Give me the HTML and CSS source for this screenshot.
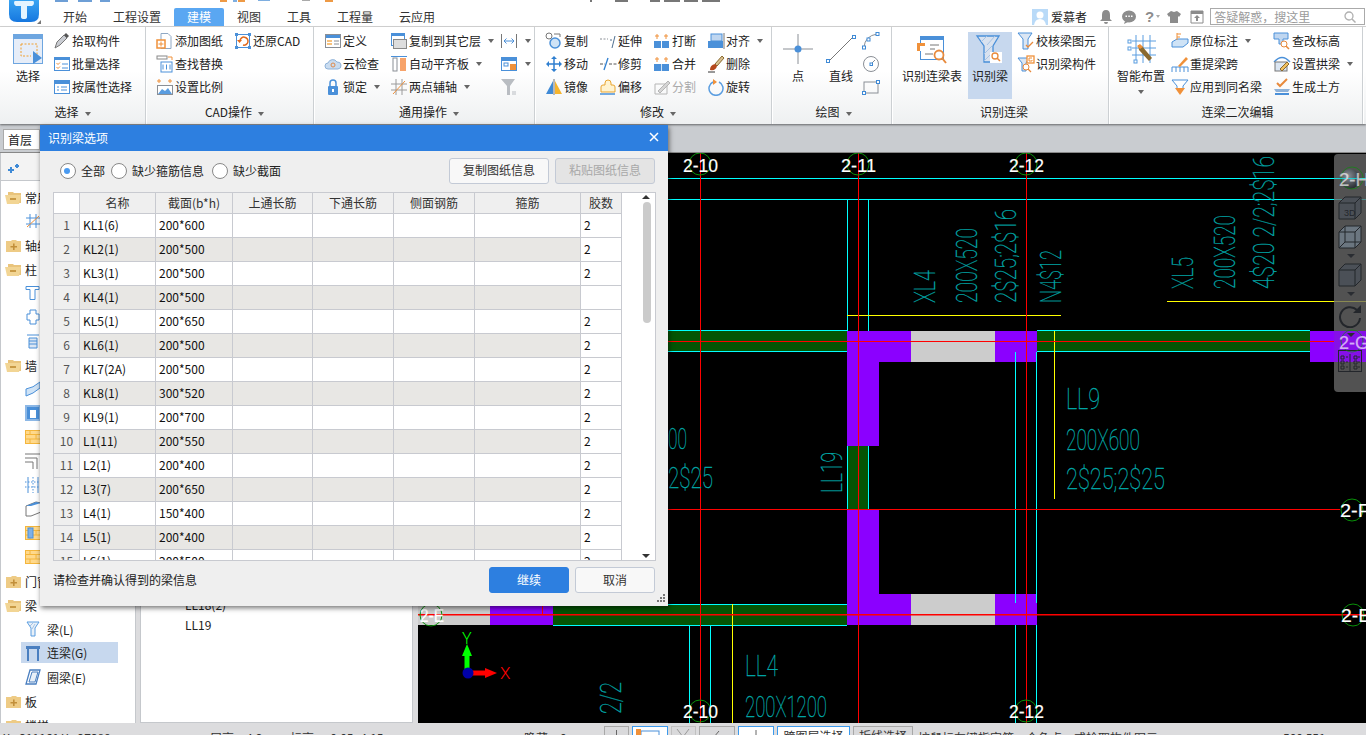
FILE: index.html
```html
<!DOCTYPE html>
<html lang="zh-CN">
<head>
    <meta charset="UTF-8">
    <title>识别梁选项</title>
    <link rel="stylesheet" href="styles.css">
</head>
<body>

    <!-- Shared icons -->
    <svg class="sprite" xmlns="http://www.w3.org/2000/svg">
        <symbol id="folder-open" viewBox="0 0 17 13">
            <path d="M3 1h5l1 1h7v10H3z" fill="#e9c47c"/>
            <path d="M0 4h14l2 0-2 9H2z" fill="#f2d594"/>
            <rect x="5" y="7" width="6" height="2" fill="#c99a45"/>
        </symbol>
        <symbol id="folder-closed" viewBox="0 0 17 13">
            <path d="M1 2h5l1-1h4l1 1h4v11H1z" fill="#eecb85"/>
            <path d="M8 4.5h1.6v2.4H12v1.6H9.600v2.400H8V8.500H5.500V6.900H8z" fill="#c28f3a"/>
        </symbol>
        <symbol id="brick" viewBox="0 0 16 14">
            <rect x=".5" y=".5" width="15" height="13" fill="#ffd98c" stroke="#f4b63c"/>
            <path d="M0 4.500h16M0 9h16M5 0v4.500M11 4.500V9M5 9v5" stroke="#f4b63c" fill="none"/>
        </symbol>
    </svg>

    <!-- Top bar -->
    <div class="topbar">
        <svg class="quick" width="720" height="3" viewBox="0 0 720 3">
            <path d="M55 0h13v2H55zM78 0h14v2H78zM100 0h10v2h-10z" fill="#6e9fd6"/>
            <path d="M220 0h7v2h-7zM325 0h8v2h-8zM238 0h7v2h-7z" fill="#ee9a45"/>
            <path d="M233 0h4v2h-4zM258 0h12v1h-12z" fill="#7eaee0"/>
            <path d="M302 0h8v1h-8z" fill="#aaa"/>
            <path d="M590 0h2v2h-2zM615 0h13v2h-13zM650 0h10v2h-10zM664 0h16v2h-16zM684 0h14v2h-14zM702 0h18v2h-18z" fill="#777"/>
        </svg>
        <div class="logo">
            <svg width="30" height="22" viewBox="0 0 30 22"><defs><linearGradient id="logo-bg" x1="0" y1="0" x2="0" y2="1"><stop offset="0" stop-color="#39a4f2"/><stop offset="1" stop-color="#1677df"/></linearGradient></defs><path d="M0 0h30v14q0 8-8 8H8q-8 0-8-8z" fill="url(#logo-bg)"/><path d="M6 1h18q1 0 1 2t-2 3h-5v11q0 2-3 2t-3-2V6H7Q5 5 5 3t1-2z" fill="#e4f4ff"/></svg>
            <span class="logo-arrow"></span>
        </div>
        <div class="tabs">
            <span class="tab">开始</span>
            <span class="tab">工程设置</span>
            <span class="tab active">建模</span>
            <span class="tab">视图</span>
            <span class="tab">工具</span>
            <span class="tab">工程量</span>
            <span class="tab">云应用</span>
        </div>
        <div class="user-area">
            <svg class="avatar" width="16" height="16" viewBox="0 0 16 16"><rect width="16" height="16" fill="#b9daf8"/><circle cx="8" cy="6" r="3.500" fill="#fff"/><path d="M2 16q1-6 6-6t6 6z" fill="#fff"/></svg>
            <span class="user-name">爱慕者</span>
            <svg class="top-ic" width="14" height="14" viewBox="0 0 14 14"><path d="M7 0q4 0 4 5v4l2 2H1l2-2V5q0-5 4-5zM5 12h4q0 2-2 2t-2-2z" fill="#8c8c8c"/></svg>
            <svg class="top-ic" width="14" height="14" viewBox="0 0 14 14"><ellipse cx="7" cy="6.500" rx="7" ry="6" fill="#8c8c8c"/><path d="M3 11l-1 3 4-2z" fill="#8c8c8c"/><path d="M3.500 5.500h1.500v1.500H3.500zM6.300 5.500h1.500v1.500H6.300zM9 5.500h1.500v1.500H9z" fill="#fff"/></svg>
            <span class="help">?</span><span class="caret small"></span>
            <svg class="top-ic" width="14" height="14" viewBox="0 0 14 14"><path d="M4 1l3 1 3-1 4 3-2 3-1-1v7H3V6L2 7 0 4z" fill="#8c8c8c"/></svg>
            <svg class="top-ic" width="14" height="14" viewBox="0 0 14 14"><path d="M1 1h12v12H1z" fill="none" stroke="#8c8c8c"/><path d="M1 1h12v3H1zM7 5l3 3H8v3H6V8H4z" fill="#8c8c8c"/></svg>
            <div class="search-box">
                <span>答疑解惑，搜这里</span>
                <svg width="12" height="12" viewBox="0 0 12 12"><circle cx="5" cy="5" r="4" fill="none" stroke="#b0b0b0" stroke-width="1.300"/><path d="M8 8l3.500 3.500" stroke="#b0b0b0" stroke-width="1.500"/></svg>
            </div>
        </div>
    </div>

    <!-- Ribbon -->
    <div class="ribbon">
        <div class="group g-select">
            <div class="group-body">
                <div class="big w-50">
                    <svg width="30" height="30" viewBox="0 0 30 30"><rect x=".5" y=".5" width="29" height="29" fill="#e6edf8" stroke="#6ea6e0"/><rect x="1" y="1" width="28" height="4" fill="#6ea6e0"/><path d="M8 10h16v14" fill="none" stroke="#f0a030" stroke-dasharray="2 1.500"/><path d="M8 10v12h10" fill="none" stroke="#f0a030" stroke-dasharray="2 1.500"/><path d="M20 17l9 7-9 6z" fill="#4a90d9"/></svg>
                    <span>选择</span>
                </div>
                <div class="stack">
                    <div class="item"><svg class="ic" viewBox="0 0 18 18"><path d="M2 16l2-6 7-7 3 3-7 7z" fill="#c9ccd2" stroke="#777"/><path d="M11 3l2-2 3 3-2 2z" fill="#555"/></svg>拾取构件</div>
                    <div class="item"><svg class="ic" viewBox="0 0 18 18"><rect x="1.500" y="2.500" width="15" height="13" fill="#fff" stroke="#4a90d9"/><path d="M1 3h16v2H1z" fill="#4a90d9"/><path d="M3.500 8l1.500 1.500 2-2M3.500 12l1.500 1.500 2-2" stroke="#f0913a" fill="none"/><path d="M9 9h6M9 13h6" stroke="#4a90d9"/></svg>批量选择</div>
                    <div class="item"><svg class="ic" viewBox="0 0 18 18"><rect x="1.500" y="2.500" width="15" height="13" fill="#fff" stroke="#4a90d9"/><path d="M1 3h16v3H1z" fill="#4a90d9"/><path d="M4 9h2M8 9h6M4 12h2M8 12h6" stroke="#4a90d9"/></svg>按属性选择</div>
                </div>
            </div>
            <div class="group-label">选择<span class="caret"></span></div>
        </div>

        <div class="group g-cad">
            <div class="group-body">
                <div class="stack w-78">
                    <div class="item"><svg class="ic" viewBox="0 0 18 18"><path d="M5 1.500h7l3 3v12H5z" fill="#fff" stroke="#8fa8c4"/><rect x="1" y="8" width="8" height="8" fill="#fff" stroke="#f0913a" stroke-width="1.500"/><path d="M5 9.500v5M2.500 12h5" stroke="#f0913a"/></svg>添加图纸</div>
                    <div class="item"><svg class="ic" viewBox="0 0 18 18"><rect x="1" y="1" width="10" height="3" fill="none" stroke="#888"/><path d="M12 2h4v3" fill="none" stroke="#f0913a"/><rect x="5" y="7" width="11" height="10" fill="#fff" stroke="#4a90d9"/><path d="M7 9.500v5M10.500 9.500v5M14 9.500v5" stroke="#4a90d9"/></svg>查找替换</div>
                    <div class="item"><svg class="ic" viewBox="0 0 18 18"><path d="M3 1v4M1 3h4M14 1v4M12 3h4" stroke="#f0913a"/><rect x="1.500" y="7.500" width="15" height="9" fill="#fff" stroke="#8a8f96"/><path d="M2 16l4-5 3 2 3-3 4 6z" fill="#5a9de0"/></svg>设置比例</div>
                </div>
                <div class="stack">
                    <div class="item"><svg class="ic" viewBox="0 0 18 18"><rect x="2.500" y="2.500" width="13" height="13" fill="none" stroke="#4a90d9"/><path d="M1 1h3v3H1zM14 1h3v3h-3zM1 14h3v3H1zM14 14h3v3h-3z" fill="#4a90d9"/><path d="M6 9a4 4 0 1 1 3 4" fill="none" stroke="#e0691c" stroke-width="1.500"/><path d="M3 8h5l-2.500 3z" fill="#e0691c"/></svg>还原CAD</div>
                </div>
            </div>
            <div class="group-label">CAD操作<span class="caret"></span></div>
        </div>

        <div class="group g-common">
            <div class="group-body">
                <div class="stack w-66">
                    <div class="item"><svg class="ic" viewBox="0 0 18 18"><rect x="1.500" y="2.500" width="15" height="13" fill="#fff" stroke="#8a8f96"/><path d="M2 3h14v3H2z" fill="#4a90d9"/><path d="M3 8h5v2H3zM3 11h5v2H3z" fill="#f7c27e"/><path d="M10 9h5M10 12h5" stroke="#8a8f96"/></svg>定义</div>
                    <div class="item"><svg class="ic" viewBox="0 0 18 18"><path d="M4 14a3 3 0 0 1 0-6 5 5 0 0 1 9-1 3.500 3.500 0 0 1 1 7z" fill="#c9dcf0" stroke="#8fb2d8"/><circle cx="9" cy="10" r="2" fill="none" stroke="#e08a4a"/></svg>云检查</div>
                    <div class="item"><svg class="ic" viewBox="0 0 18 18"><path d="M6 8V5a3 3 0 0 1 6 0v3" fill="none" stroke="#4a90d9" stroke-width="1.500"/><rect x="4" y="8" width="10" height="9" rx="1" fill="#4a90d9"/><rect x="8" y="11" width="2" height="3" fill="#fff"/></svg>锁定<span class="caret"></span></div>
                </div>
                <div class="stack w-110">
                    <div class="item"><svg class="ic" viewBox="0 0 18 18"><rect x="1.500" y="1.500" width="13" height="12" fill="#fff" stroke="#4a90d9"/><rect x="1" y="1" width="14" height="3" fill="#4a90d9"/><rect x="3.500" y="7.500" width="13" height="9" fill="#ddd" stroke="#888"/></svg>复制到其它层<span class="caret"></span></div>
                    <div class="item"><svg class="ic" viewBox="0 0 18 18"><path d="M1 1.500h16" stroke="#4a90d9"/><rect x="3" y="3" width="4" height="13" fill="#fff" stroke="#8a8f96"/><rect x="10" y="3" width="6" height="13" fill="#f7a36a"/></svg>自动平齐板<span class="caret"></span></div>
                    <div class="item"><svg class="ic" viewBox="0 0 18 18"><path d="M1 12h16M1 6h16M6 1v16M12 1v16" stroke="#9a9a9a"/><path d="M3 16L15 3" stroke="#f0913a"/></svg>两点辅轴<span class="caret"></span></div>
                </div>
                <div class="stack">
                    <div class="item"><svg class="ic" viewBox="0 0 18 18"><path d="M1.500 2v14M16.500 2v14" stroke="#777"/><path d="M4 9h10M4 9l2.500-2.500M4 9l2.500 2.500M14 9l-2.500-2.500M14 9l-2.500 2.500" stroke="#4a90d9" fill="none"/></svg><span class="caret"></span></div>
                    <div class="item"><svg class="ic" viewBox="0 0 18 18"><rect x="1.500" y="2.500" width="15" height="13" fill="#fff" stroke="#4a90d9"/><path d="M2 3h14v3H2z" fill="#4a90d9"/><rect x="4" y="8" width="4" height="3" fill="#fff" stroke="#4a90d9"/><rect x="10" y="9" width="6" height="6" fill="#f0913a"/></svg><span class="caret"></span></div>
                    <div class="item"><svg class="ic" viewBox="0 0 18 18"><path d="M1 1h14l-5 7v9H7V8z" fill="#b9bdc2"/><path d="M12 14h4M12 16h4" stroke="#b9bdc2"/></svg></div>
                </div>
            </div>
            <div class="group-label">通用操作<span class="caret"></span></div>
        </div>

        <div class="group g-edit">
            <div class="group-body">
                <div class="stack w-54">
                    <div class="item"><svg class="ic" viewBox="0 0 18 18"><circle cx="4" cy="4" r="3" fill="#fff" stroke="#777"/><circle cx="10" cy="11" r="5" fill="#cfe3f6" stroke="#4a90d9" stroke-width="1.500"/><path d="M9 2h6v3" fill="none" stroke="#777"/></svg>复制</div>
                    <div class="item"><svg class="ic" viewBox="0 0 18 18"><path d="M9 1l3 3H6zM9 17l-3-3h6zM1 9l3-3v6zM17 9l-3 3V6z" fill="#2f7fd0"/><path d="M9 4v10M4 9h10" stroke="#2f7fd0" stroke-width="1.500"/></svg>移动</div>
                    <div class="item"><svg class="ic" viewBox="0 0 18 18"><path d="M8 3v13H1z" fill="#3f8ad6"/><path d="M10 3v13h7z" fill="#f6b52e"/><path d="M9 1v16" stroke="#777"/></svg>镜像</div>
                </div>
                <div class="stack w-54">
                    <div class="item"><svg class="ic" viewBox="0 0 18 18"><path d="M1 7h8" stroke="#8a8f96" stroke-dasharray="2 1.500"/><path d="M11 8h2M16 4l-3 12" stroke="#4f6f90"/></svg>延伸</div>
                    <div class="item"><svg class="ic" viewBox="0 0 18 18"><path d="M1 9h5M10 9h8" stroke="#555" stroke-dasharray="3 1.500"/><path d="M9 3L5 15" stroke="#2f7fd0" stroke-width="1.300"/></svg>修剪</div>
                    <div class="item"><svg class="ic" viewBox="0 0 18 18"><path d="M2 14V9q0-2 2-2h2V5a3 3 0 0 1 6 0v2h2q2 0 2 2v5z" fill="#fff3d0" stroke="#e9a52e"/><path d="M1 16h15" stroke="#4a90d9" stroke-width="1.500"/></svg>偏移</div>
                </div>
                <div class="stack w-54">
                    <div class="item"><svg class="ic" viewBox="0 0 18 18"><rect x="1" y="9" width="7" height="7" fill="#4a90d9"/><rect x="9" y="9" width="7" height="7" fill="#4a90d9"/><path d="M4 2v5M2 4h4M13 2v5M11 4h4" stroke="#f0913a"/></svg>打断</div>
                    <div class="item"><svg class="ic" viewBox="0 0 18 18"><rect x="1" y="9" width="15" height="7" fill="#4a90d9"/><path d="M8.500 9v7" stroke="#cfe3f6"/><path d="M4 2v5M2 4h4M13 2v5M11 4h4" stroke="#f0913a"/></svg>合并</div>
                    <div class="item muted"><svg class="ic" viewBox="0 0 18 18"><path d="M2 6h12v10H2z" fill="none" stroke="#b5b5b5"/><path d="M5 13L15 3l2 2L7 15z" fill="#d5d5d5" stroke="#b5b5b5"/></svg>分割</div>
                </div>
                <div class="stack">
                    <div class="item"><svg class="ic" viewBox="0 0 18 18"><rect x="4" y="2" width="11" height="7" fill="#bfd6f0" stroke="#4a90d9"/><rect x="1" y="9" width="15" height="7" fill="#4a90d9"/><path d="M17 1v16" stroke="#777"/></svg>对齐<span class="caret"></span></div>
                    <div class="item"><svg class="ic" viewBox="0 0 18 18"><path d="M8 9l7-8 2 2-7 8z" fill="#d8c090" stroke="#8a6a30"/><path d="M3 15q0-5 5-6l2 2q-1 5-7 4z" fill="#b5481c"/><path d="M1 17h7" stroke="#333"/></svg>删除</div>
                    <div class="item"><svg class="ic" viewBox="0 0 18 18"><path d="M6 4a7 7 0 1 0 6 0" fill="none" stroke="#5a9de0" stroke-width="1.500"/><path d="M6 1l4 3-4 3z" fill="#f0913a"/></svg>旋转</div>
                </div>
            </div>
            <div class="group-label">修改<span class="caret"></span></div>
        </div>

        <div class="group g-draw">
            <div class="group-body">
                <div class="big w-44">
                    <svg width="30" height="30" viewBox="0 0 30 30"><path d="M15 0v30M0 15h30" stroke="#8a8f96"/><circle cx="15" cy="15" r="3.500" fill="#4a90d9"/></svg>
                    <span>点</span>
                </div>
                <div class="big w-42">
                    <svg width="30" height="30" viewBox="0 0 30 30"><path d="M2 28L28 2" stroke="#777"/><rect x=".5" y="25.500" width="3" height="3" fill="#fff" stroke="#3f8ad6"/><rect x="26.500" y="1.500" width="3" height="3" fill="#fff" stroke="#3f8ad6"/></svg>
                    <span>直线</span>
                </div>
                <div class="stack">
                    <div class="item"><svg class="ic" viewBox="0 0 18 18"><path d="M2 15Q3 4 15 2" fill="none" stroke="#8a8f96"/><rect x=".5" y="14" width="3" height="3" fill="#fff" stroke="#3f8ad6"/><rect x="5" y="6" width="3" height="3" fill="#fff" stroke="#3f8ad6"/><rect x="14" y=".5" width="3" height="3" fill="#fff" stroke="#3f8ad6"/></svg></div>
                    <div class="item"><svg class="ic" viewBox="0 0 18 18"><circle cx="9" cy="9" r="7.500" fill="none" stroke="#8a8f96"/><path d="M9 9l4-4" stroke="#8a8f96"/><rect x="8" y="8" width="2.500" height="2.500" fill="#fff" stroke="#3f8ad6"/></svg></div>
                    <div class="item"><svg class="ic" viewBox="0 0 18 18"><rect x="2" y="4" width="14" height="11" fill="none" stroke="#8a8f96"/><rect x=".5" y="13.500" width="3" height="3" fill="#fff" stroke="#3f8ad6"/><rect x="14.500" y="2.500" width="3" height="3" fill="#fff" stroke="#3f8ad6"/></svg></div>
                </div>
            </div>
            <div class="group-label">绘图<span class="caret"></span></div>
        </div>

        <div class="group g-recog">
            <div class="group-body">
                <div class="big w-64">
                    <svg width="30" height="30" viewBox="0 0 30 30"><rect x="3.500" y="2.500" width="23" height="23" fill="#fff" stroke="#4a90d9"/><rect x="3" y="2" width="24" height="4" fill="#4a90d9"/><path d="M13 11h9M13 15h5M8 20h8" stroke="#777"/><rect x="0" y="9" width="8" height="8" fill="#f0913a"/><rect x="3" y="12" width="5" height="5" fill="#fff"/><circle cx="22" cy="21" r="4.500" fill="#fff" stroke="#e88a3c" stroke-width="1.800"/><path d="M25 24l4 5" stroke="#e88a3c" stroke-width="2"/></svg>
                    <span>识别连梁表</span>
                </div>
                <div class="big w-44 selected">
                    <svg width="30" height="30" viewBox="0 0 30 30"><path d="M2 2h22l-6 10v16H9V12z" fill="#d9e2ef" stroke="#4a90d9" stroke-width="1.300"/><path d="M6 8l6-6M12 11l8-9M9 20l9-9M9 27l9-9" stroke="#a5c3e5"/><rect x="15" y="18" width="12" height="11" fill="#fff"/><circle cx="20" cy="22" r="3" fill="none" stroke="#e88a3c" stroke-width="1.300"/><path d="M22 24l3 3" stroke="#e88a3c" stroke-width="1.500"/></svg>
                    <span>识别梁</span>
                </div>
                <div class="stack">
                    <div class="item"><svg class="ic" viewBox="0 0 18 18"><path d="M1 1h14l-4 6v10H6V7z" fill="#dbe6f3" stroke="#4a90d9"/><path d="M9 13l2 2 5-5" stroke="#e88a3c" fill="none" stroke-width="1.300"/></svg>校核梁图元</div>
                    <div class="item"><svg class="ic" viewBox="0 0 18 18"><path d="M1 3h11l-3 5v8H5V8z" fill="#dbe6f3" stroke="#4a90d9"/><rect x="10" y="1" width="7" height="7" fill="#fff" stroke="#f0913a" stroke-width="1.300"/><path d="M15 3h-3v3h3V5" fill="none" stroke="#f0913a"/><circle cx="9" cy="12" r="3" fill="#fff" stroke="#e88a3c"/><path d="M11 14l3 3" stroke="#e88a3c" stroke-width="1.300"/></svg>识别梁构件</div>
                </div>
            </div>
            <div class="group-label">识别连梁</div>
        </div>

        <div class="group g-second">
            <div class="group-body">
                <div class="big w-56">
                    <svg width="30" height="30" viewBox="0 0 30 30"><path d="M6 7h24M6 14h24M6 21h24M10 1v28M17 1v28M24 1v28" stroke="#5a9de0"/><path d="M12 11l4 1 10 12-3 3-10-11z" fill="#8a6a30"/><path d="M11 12l3-2 3 3-3 2z" fill="#f0913a"/><rect x="2" y="6" width="3" height="3" fill="#fff" stroke="#5a9de0"/><rect x="2" y="13" width="3" height="3" fill="#fff" stroke="#5a9de0"/><rect x="8" y="26" width="3" height="3" fill="#fff" stroke="#5a9de0"/></svg>
                    <span>智能布置</span>
                    <span class="caret big-caret"></span>
                </div>
                <div class="stack w-102">
                    <div class="item"><svg class="ic" viewBox="0 0 18 18"><path d="M1 10l5-3h11v4l-5 4H1z" fill="#cfe3f6" stroke="#4a90d9"/><path d="M6 1v7M6 2h4M6 5h3" stroke="#f0913a"/></svg>原位标注<span class="caret"></span></div>
                    <div class="item"><svg class="ic" viewBox="0 0 18 18"><path d="M1 17v-5h16v5M5 12v5M13 12v5M9 12v5" fill="none" stroke="#4a90d9"/><path d="M7 11L15 2l2 2-8 8z" fill="#f0913a"/></svg>重提梁跨</div>
                    <div class="item"><svg class="ic" viewBox="0 0 18 18"><path d="M1 2h16l-5 6v3H6V8z" fill="#fff" stroke="#4a90d9"/><path d="M4 10h10l-5 7z" fill="#f0913a"/></svg>应用到同名梁</div>
                </div>
                <div class="stack">
                    <div class="item"><svg class="ic" viewBox="0 0 18 18"><path d="M1 1h14v6H10v5H6V7H1z" fill="#bfd6f0" stroke="#4a90d9"/><circle cx="11" cy="12" r="3" fill="#fff" stroke="#e88a3c"/><path d="M13 14l3 3" stroke="#e88a3c" stroke-width="1.500"/></svg>查改标高</div>
                    <div class="item"><svg class="ic" viewBox="0 0 18 18"><path d="M1 7q8-9 16 0" fill="none" stroke="#4a90d9" stroke-width="1.300"/><rect x="2" y="7" width="12" height="9" fill="#dbe6f3" stroke="#777"/><path d="M7 14l7-7 2 2-7 7z" fill="#f0c060" stroke="#8a6a30"/></svg>设置拱梁<span class="caret"></span></div>
                    <div class="item"><svg class="ic" viewBox="0 0 18 18"><path d="M4 5l3 3 7-7" fill="none" stroke="#e88a3c" stroke-width="2"/><path d="M1 11h16l-2 3H3z" fill="#8fb2d8"/><path d="M2 15h14v2H2z" fill="#4a90d9"/></svg>生成土方</div>
                </div>
            </div>
            <div class="group-label">连梁二次编辑</div>
        </div>
    </div>

    <!-- Floor strip -->
    <div class="floor-strip">
        <span class="floor-tab">首层</span>
    </div>

    <div class="main">
        <!-- Component tree -->
        <div class="tree">
            <div class="tree-head">
                <svg width="12" height="10" viewBox="0 0 12 10"><path d="M3 4v2H1v2h2v2h2V8h2V6H5V4zM9 1v1H8v2h1v1h2V4h1V2h-1V1z" fill="#3f8ad6"/></svg>
            </div>
            <div class="tree-row"><svg class="folder"><use href="#folder-open"/></svg>常用构件类型</div>
            <div class="tree-row sub"><svg class="leaf" viewBox="0 0 16 16"><path d="M1 5h14M1 11h14M5 1v14M11 1v14" stroke="#4a90d9"/><path d="M2 14L14 3" stroke="#f0913a"/></svg>轴网(J)</div>
            <div class="tree-row"><svg class="folder"><use href="#folder-closed"/></svg>轴线</div>
            <div class="tree-row"><svg class="folder"><use href="#folder-open"/></svg>柱</div>
            <div class="tree-row sub"><svg class="leaf" viewBox="0 0 16 16"><path d="M1 1.500h13v3H10v10H5v-10H1z" fill="#fff" stroke="#4a90d9"/></svg>柱(Z)</div>
            <div class="tree-row sub"><svg class="leaf" viewBox="0 0 16 16"><path d="M5 1h6v4h3v6h-3v4H5v-4H2V5h3z" fill="#fff" stroke="#4a90d9"/></svg>构造柱(Z)</div>
            <div class="tree-row sub"><svg class="leaf" viewBox="0 0 16 16"><path d="M2 2h12M4 5h8v10H4zM4 8h8M4 11h8" stroke="#4a90d9" fill="#dbe6f3"/></svg>砌体柱(Z)</div>
            <div class="tree-row"><svg class="folder"><use href="#folder-open"/></svg>墙</div>
            <div class="tree-row sub"><svg class="leaf" viewBox="0 0 16 16"><path d="M1 8q7-1 14-7v6Q8 13 1 15z" fill="#cfe3f6" stroke="#4a90d9"/></svg>剪力墙(Q)</div>
            <div class="tree-row sub"><svg class="leaf" viewBox="0 0 16 16"><rect x="0" y="0" width="16" height="16" fill="#8db8e6"/><rect x="2" y="2" width="12" height="12" fill="#4a90d9"/><rect x="5" y="5" width="6" height="8" fill="#fff"/></svg>人防门框墙(RF)</div>
            <div class="tree-row sub"><svg class="leaf"><use href="#brick"/></svg>砌体墙(Q)</div>
            <div class="tree-row sub"><svg class="leaf" viewBox="0 0 16 16"><path d="M0 1h16M0 5h12v11M0 9h8v7M16 1v15" stroke="#777" fill="none"/></svg>砌体加筋(Y)</div>
            <div class="tree-row sub"><svg class="leaf" viewBox="0 0 16 16"><path d="M3 0v16M13 0v16" stroke="#4a90d9"/><path d="M0 5h16M0 10h16M8 0v16" stroke="#4a90d9" stroke-dasharray="1.500 1.500"/></svg>保温墙(Q)</div>
            <div class="tree-row sub"><svg class="leaf" viewBox="0 0 16 16"><path d="M1 5l10-4 5 1v9L6 15H1z" fill="#fff" stroke="#777"/><path d="M1 5l10-4 5 1-10 3z" fill="#4a90d9"/></svg>暗梁(A)</div>
            <div class="tree-row sub"><svg class="leaf"><use href="#brick"/><rect x="3" y="3" width="5" height="10" fill="#7fb0e6" stroke="#4a90d9"/></svg>墙垛(E)</div>
            <div class="tree-row sub"><svg class="leaf"><use href="#brick"/></svg>幕墙(Q)</div>
            <div class="tree-row"><svg class="folder"><use href="#folder-closed"/></svg>门窗洞</div>
            <div class="tree-row"><svg class="folder"><use href="#folder-open"/></svg>梁</div>
            <div class="tree-row sub"><svg class="leaf" viewBox="0 0 16 16"><path d="M2 1h12l-4 6v8H6V7z" fill="#e8f0f8" stroke="#5a9de0"/><path d="M5 5l3-3M7 8l3-5" stroke="#a5c3e5"/></svg>梁(L)</div>
            <div class="tree-row sub current"><svg class="leaf" viewBox="0 0 16 16"><path d="M1 1h14v3H1z" fill="#4a7fc0"/><path d="M3 4v12M13 4v12" stroke="#4a7fc0" stroke-width="2" fill="none"/></svg>连梁(G)</div>
            <div class="tree-row sub"><svg class="leaf" viewBox="0 0 16 16"><path d="M5 1h10l-4 14H1z" fill="#fff" stroke="#4a7fc0" stroke-width="1.300"/><path d="M7 3h6l-3 10H4z" fill="#e8f0f8" stroke="#4a7fc0"/></svg>圈梁(E)</div>
            <div class="tree-row"><svg class="folder"><use href="#folder-closed"/></svg>板</div>
            <div class="tree-row"><svg class="folder"><use href="#folder-closed"/></svg>楼梯</div>
        </div>

        <!-- Component list -->
        <div class="comp-list">
            <div class="comp-row">LL18(2)</div>
            <div class="comp-row">LL19</div>
        </div>

        <!-- Drawing canvas -->
        <div class="canvas">
            <svg class="cad" width="948" height="570" viewBox="418 153 948 570" xmlns="http://www.w3.org/2000/svg">
                <g class="fills">
                    <rect x="668" y="331" width="179" height="20" fill="#045404"/>
                    <rect x="1037" y="331" width="273" height="20" fill="#045404"/>
                    <rect x="847" y="446" width="21" height="64" fill="#045404"/>
                    <rect x="553" y="604" width="294" height="21" fill="#045404"/>
                    <rect x="418" y="604" width="72" height="21" fill="#cccccc"/>
                    <rect x="911" y="331" width="84" height="31" fill="#cccccc"/>
                    <rect x="911" y="594" width="84" height="31" fill="#cccccc"/>
                    <path d="M847 331h64v31h-32v84h-32z" fill="#8b00ff"/>
                    <rect x="995" y="331" width="42" height="31" fill="#8b00ff"/>
                    <rect x="1310" y="331" width="56" height="31" fill="#8b00ff"/>
                    <path d="M847 510h32v84h32v31h-64z" fill="#8b00ff"/>
                    <rect x="995" y="594" width="42" height="31" fill="#8b00ff"/>
                    <rect x="490" y="604" width="63" height="21" fill="#8b00ff"/>
                </g>
                <g class="cyan">
                    <path d="M418 178.500H1366M418 199.500H1366"/>
                    <path d="M668 330.500H847M1037 330.500H1310M668 351.500H847M1037 351.500H1310"/>
                    <path d="M553 604.500H847M553 625.500H847"/>
                    <path d="M847.500 199V331M868.500 199V331M847.500 446V510M868.500 446V510"/>
                    <path d="M1015.500 352V603M1036.500 352V603M1015.500 625V723M1036.500 625V723"/>
                    <path d="M689.500 625V723M710.500 625V723"/>
                </g>
                <g class="yellow">
                    <path d="M847 315.500H1061M1167 301.500H1366"/>
                    <path d="M1054.500 331V499M732.500 604V723"/>
                </g>
                <g class="red">
                    <path d="M700.500 153V723M858.500 153V723M1026.500 153V723"/>
                    <path d="M418 341.500H1366M668 509.500H1340"/>
                    <path class="red-thick" d="M418 614.800H1366"/>
                    <path d="M542.500 604V615"/>
                </g>
                <g class="axis-circle">
                    <circle cx="700" cy="164" r="11"/>
                    <circle cx="858" cy="164" r="11"/>
                    <circle cx="1026" cy="164" r="11"/>
                    <circle cx="700" cy="711" r="11"/>
                    <circle cx="1026" cy="711" r="11"/>
                    <circle cx="1352" cy="510" r="11"/>
                    <circle cx="1353" cy="615" r="11"/>
                    <circle cx="431" cy="615" r="11"/>
                </g>
                <g class="axis-label">
                    <text x="683" y="172" textLength="35" lengthAdjust="spacingAndGlyphs">2-10</text>
                    <text x="841" y="172" textLength="35" lengthAdjust="spacingAndGlyphs">2-11</text>
                    <text x="1009" y="172" textLength="35" lengthAdjust="spacingAndGlyphs">2-12</text>
                    <text x="683" y="718" textLength="35" lengthAdjust="spacingAndGlyphs">2-10</text>
                    <text x="1009" y="718" textLength="35" lengthAdjust="spacingAndGlyphs">2-12</text>
                    <text x="1340" y="517" textLength="30" lengthAdjust="spacingAndGlyphs">2-F</text>
                    <text x="1341" y="622" textLength="30" lengthAdjust="spacingAndGlyphs">2-E</text>
                    <text x="420" y="622" textLength="24" lengthAdjust="spacingAndGlyphs">2-E</text>
                </g>
                <g class="cad-text">
                    <text x="1066" y="409" textLength="34" lengthAdjust="spacingAndGlyphs">LL9</text>
                    <text x="1066" y="450" textLength="74" lengthAdjust="spacingAndGlyphs">200X600</text>
                    <text x="1066" y="489" textLength="99" lengthAdjust="spacingAndGlyphs">2$25;2$25</text>
                    <text x="668" y="449" textLength="19" lengthAdjust="spacingAndGlyphs">00</text>
                    <text x="668" y="488" textLength="45" lengthAdjust="spacingAndGlyphs">2$25</text>
                    <text x="745" y="676" textLength="33" lengthAdjust="spacingAndGlyphs">LL4</text>
                    <text x="745" y="717" textLength="82" lengthAdjust="spacingAndGlyphs">200X1200</text>
                    <text transform="translate(935 303) rotate(-90)" textLength="33" lengthAdjust="spacingAndGlyphs">XL4</text>
                    <text transform="translate(977 303) rotate(-90)" textLength="75" lengthAdjust="spacingAndGlyphs">200X520</text>
                    <text transform="translate(1016 303) rotate(-90)" textLength="94" lengthAdjust="spacingAndGlyphs">2$25;2$16</text>
                    <text transform="translate(1061 303) rotate(-90)" textLength="53" lengthAdjust="spacingAndGlyphs">N4$12</text>
                    <text transform="translate(1193 289) rotate(-90)" textLength="32" lengthAdjust="spacingAndGlyphs">XL5</text>
                    <text transform="translate(1235 289) rotate(-90)" textLength="74" lengthAdjust="spacingAndGlyphs">200X520</text>
                    <text transform="translate(1274 289) rotate(-90)" textLength="133" lengthAdjust="spacingAndGlyphs">4$20 2/2;2$16</text>
                    <text transform="translate(842 493) rotate(-90)" textLength="41" lengthAdjust="spacingAndGlyphs">LL19</text>
                    <text transform="translate(621 714) rotate(-90)" textLength="32" lengthAdjust="spacingAndGlyphs">2/2</text>
                </g>
                <g class="ucs">
                    <path d="M467 672V655" stroke="#00ff00" stroke-width="5"/>
                    <path d="M467 644l5 12h-10z" fill="#00ff00"/>
                    <path d="M472 673H487" stroke="#ff0000" stroke-width="5"/>
                    <path d="M497 673l-12-5v10z" fill="#ff0000"/>
                    <circle cx="468" cy="673" r="5.500" fill="#0000a8"/>
                    <text class="ucs-y" x="462" y="644">Y</text>
                    <text class="ucs-x" x="500" y="679">X</text>
                </g>
            </svg>

            <!-- View toolbar floating on the drawing -->
            <div class="view-bar">
                <span class="view-purple"></span>
                <svg width="24" height="24" viewBox="0 0 24 24"><defs><radialGradient id="ball" cx=".4" cy=".35" r=".7"><stop offset="0" stop-color="#8a9098"/><stop offset="1" stop-color="#23262b"/></radialGradient></defs><circle cx="12" cy="12" r="10" fill="url(#ball)"/></svg>
                <svg width="24" height="24" viewBox="0 0 24 24"><path d="M1 7l6-6h16v16l-6 6H1z" fill="#4b5057" stroke="#23262b"/><path d="M1 7h16v16M17 7l6-6" fill="none" stroke="#23262b"/><text class="view-3d" x="6" y="20">3D</text></svg>
                <svg width="24" height="24" viewBox="0 0 24 24"><path d="M1 7l6-6h16v16l-6 6H1z" fill="#6b7680" stroke="#23262b"/><path d="M1 7h16v16M17 7l6-6M7 1v16H23M7 17l-6 6" fill="none" stroke="#23262b"/></svg>
                <span class="view-arrow"></span>
                <svg width="24" height="24" viewBox="0 0 24 24"><path d="M1 7l6-6h16v16l-6 6H1z" fill="#4b5057" stroke="#23262b"/><path d="M1 7h16v16M17 7l6-6" fill="none" stroke="#23262b"/></svg>
                <span class="view-arrow"></span>
                <svg class="view-rot" width="24" height="24" viewBox="0 0 24 24"><path d="M19 6a10 10 0 1 0 3 8" fill="none" stroke="#23262b" stroke-width="2"/><path d="M23 1v8h-8z" fill="#23262b"/></svg>
                <span class="view-arrow"></span>
                <svg class="view-calc" width="24" height="22" viewBox="0 0 24 22"><rect x=".5" y=".5" width="23" height="21" fill="none" stroke="#23262b"/><path d="M12 4v18M3 6h3v3H3zM3 11h3v3H3zM3 16h3v3H3zM16 6h3v3h-3zM16 11h3v3h-3zM16 16h3v3h-3zM8 7h2M8 12h2M8 17h2M20 7h2M20 12h2M20 17h2" fill="none" stroke="#23262b"/></svg>
            </div>

            <!-- Axis marks that stay readable over the toolbar -->
            <svg class="cad-top" width="948" height="570" viewBox="418 153 948 570" xmlns="http://www.w3.org/2000/svg">
                <g class="axis-circle">
                    <circle cx="1352" cy="178" r="11"/>
                    <circle cx="1352" cy="341" r="11"/>
                </g>
                <path class="top-line" d="M1334 178.500H1366"/>
                <g class="axis-label">
                    <text x="1339" y="186" textLength="30" lengthAdjust="spacingAndGlyphs">2-H</text>
                    <text x="1339" y="349" textLength="30" lengthAdjust="spacingAndGlyphs">2-G</text>
                </g>
            </svg>
        </div>
    </div>

    <!-- Status bar -->
    <div class="status">
        <span class="st-coord">X= 311161 Y= 27389</span>
        <span class="st-height">层高：4.2</span>
        <span class="st-level">标高：-0.05~4.15</span>
        <span class="st-hide">隐藏：0</span>
        <span class="st-btn st-gray w-26"><svg width="23" height="9" viewBox="0 0 23 9"><path d="M11.500 2v7" stroke="#666"/></svg></span>
        <span class="st-btn st-blue w-37"><svg width="34" height="9" viewBox="0 0 34 9"><rect x="8" y="3" width="18" height="8" fill="none" stroke="#4a90d9"/><rect x="3" y="1" width="5" height="6" fill="#f0913a"/></svg></span>
        <span class="st-btn st-gray w-26 st-light"><svg width="23" height="9" viewBox="0 0 23 9"><path d="M5 1l6 8 6-8" fill="none" stroke="#999"/></svg></span>
        <span class="st-btn st-gray w-36"><svg width="34" height="9" viewBox="0 0 34 9"><path d="M14 9l5-6" stroke="#666"/></svg></span>
        <span class="st-btn st-blue w-37"><svg width="34" height="9" viewBox="0 0 34 9"><path d="M17 2v7" stroke="#666"/></svg></span>
        <span class="st-btn st-blue w-74">跨图层选择</span>
        <span class="st-btn st-gray w-60">折线选择</span>
        <span class="st-hint">按鼠标左键指定第一个角点，或拾取构件图元</span>
        <span class="st-size">500 551</span>
    </div>

    <!-- Dialog -->
    <div class="dialog">
        <div class="dialog-title">
            <span>识别梁选项</span>
            <svg width="10" height="10" viewBox="0 0 10 10"><path d="M1 1l8 8M9 1l-8 8" stroke="#fff" stroke-width="1.500"/></svg>
        </div>
        <div class="dialog-tools">
            <label class="radio checked">全部</label>
            <label class="radio second">缺少箍筋信息</label>
            <label class="radio">缺少截面</label>
            <button class="btn tools-first">复制图纸信息</button>
            <button class="btn disabled">粘贴图纸信息</button>
        </div>
        <div class="table-wrap">
            <table class="beams">
                <colgroup>
                    <col class="c-no"><col class="c-name"><col class="c-sec"><col class="c-top">
                    <col class="c-bot"><col class="c-side"><col class="c-hoop"><col class="c-leg">
                </colgroup>
                <thead>
                    <tr><th class="corner"></th><th>名称</th><th>截面(b*h)</th><th>上通长筋</th><th>下通长筋</th><th>侧面钢筋</th><th>箍筋</th><th>胶数</th></tr>
                </thead>
                <tbody>
                    <tr><th>1</th><td>KL1(6)</td><td>200*600</td><td></td><td></td><td></td><td></td><td>2</td></tr>
                    <tr><th>2</th><td>KL2(1)</td><td>200*500</td><td></td><td></td><td></td><td></td><td>2</td></tr>
                    <tr><th>3</th><td>KL3(1)</td><td>200*500</td><td></td><td></td><td></td><td></td><td>2</td></tr>
                    <tr><th>4</th><td>KL4(1)</td><td>200*500</td><td></td><td></td><td></td><td></td><td></td></tr>
                    <tr><th>5</th><td>KL5(1)</td><td>200*650</td><td></td><td></td><td></td><td></td><td>2</td></tr>
                    <tr><th>6</th><td>KL6(1)</td><td>200*500</td><td></td><td></td><td></td><td></td><td>2</td></tr>
                    <tr><th>7</th><td>KL7(2A)</td><td>200*500</td><td></td><td></td><td></td><td></td><td>2</td></tr>
                    <tr><th>8</th><td>KL8(1)</td><td>300*520</td><td></td><td></td><td></td><td></td><td>2</td></tr>
                    <tr><th>9</th><td>KL9(1)</td><td>200*700</td><td></td><td></td><td></td><td></td><td>2</td></tr>
                    <tr><th>10</th><td>L1(11)</td><td>200*550</td><td></td><td></td><td></td><td></td><td>2</td></tr>
                    <tr><th>11</th><td>L2(1)</td><td>200*400</td><td></td><td></td><td></td><td></td><td>2</td></tr>
                    <tr><th>12</th><td>L3(7)</td><td>200*650</td><td></td><td></td><td></td><td></td><td>2</td></tr>
                    <tr><th>13</th><td>L4(1)</td><td>150*400</td><td></td><td></td><td></td><td></td><td>2</td></tr>
                    <tr><th>14</th><td>L5(1)</td><td>200*400</td><td></td><td></td><td></td><td></td><td>2</td></tr>
                    <tr><th>15</th><td>L6(1)</td><td>200*500</td><td></td><td></td><td></td><td></td><td>2</td></tr>
                </tbody>
            </table>
            <span class="scroll-up"></span>
            <span class="scroll-thumb"></span>
            <span class="scroll-down"></span>
        </div>
        <div class="dialog-foot">
            <span class="foot-note">请检查并确认得到的梁信息</span>
            <button class="btn primary">继续</button>
            <button class="btn">取消</button>
        </div>
        <svg class="grip" width="10" height="10" viewBox="0 0 10 10"><path d="M7 0h2v2H7zM4 3h2v2H4zM7 3h2v2H7zM1 6h2v2H1zM4 6h2v2H4zM7 6h2v2H7z" fill="#777"/></svg>
    </div>

</body>
</html>
```

FILE: styles.css
```css
* {
    margin: 0;
    padding: 0;
    box-sizing: border-box;
}

body {
    width: 1366px;
    height: 735px;
    overflow: hidden;
    display: flex;
    flex-direction: column;
    position: relative;
    background-color: #dcdcde;
    color: #222;
    font-family: "Noto Sans CJK SC", "Liberation Sans", sans-serif;
    font-size: 12px;
}

.sprite {
    display: none;
}

/* Top bar */
.topbar {
    height: 27px;
    background-color: #fff;
    border-bottom: 1px solid #d6d6d6;
    display: flex;
    position: relative;
}

.quick {
    position: absolute;
    left: 0;
    top: 0;
}

.logo {
    width: 50px;
    padding-left: 9px;
    position: relative;
}

.logo svg {
    display: block;
}

.logo-arrow {
    position: absolute;
    left: 37px;
    top: 20px;
    border-left: 4px solid transparent;
    border-bottom: 4px solid #777;
}

.tabs {
    display: flex;
    align-items: flex-end;
    height: 26px;
}

.tab {
    height: 18px;
    line-height: 18px;
    text-align: center;
    color: #333;
    padding: 0 13px;
}

.tab.active {
    background-color: #5aa7f2;
    color: #fff;
    border-radius: 2px 2px 0 0;
}

.user-area {
    position: absolute;
    left: 1032px;
    top: 8px;
    display: flex;
    align-items: center;
    height: 17px;
    white-space: nowrap;
}

.user-name {
    margin: 0 12px 0 3px;
}

.top-ic {
    margin-right: 9px;
    flex-shrink: 0;
}

.help {
    font: bold 15px "Liberation Sans", sans-serif;
    color: #8c8c8c;
    margin-right: 2px;
}

.search-box {
    width: 155px;
    height: 17px;
    margin-left: -3px;
    border: 1px solid #aaa;
    background-color: #fff;
    color: #9a9a9a;
    line-height: 15px;
    padding: 0 8px 0 3px;
    display: flex;
    justify-content: space-between;
    align-items: center;
}

/* Ribbon */
.ribbon {
    height: 97px;
    display: flex;
    background: linear-gradient(to bottom, #fff 45%, #eef0f1);
    box-shadow: 0 1px 2px rgba(0, 0, 0, 0.5);
    position: relative;
    z-index: 1;
}

.group {
    display: flex;
    flex-direction: column;
    border-right: 1px solid #ccd0d3;
    box-shadow: 1px 0 0 #fff;
}

.group-body {
    flex: 1;
    display: flex;
    padding-top: 2px;
    overflow: hidden;
}

.group-label {
    height: 21px;
    line-height: 17px;
    text-align: center;
}

.g-select { width: 146px; }
.g-cad { width: 168px; padding-left: 10px; }
.g-common { width: 221px; padding-left: 10px; }
.g-edit { width: 237px; padding-left: 10px; }
.g-draw { width: 120px; padding-left: 4px; }
.g-recog { width: 217px; padding-left: 8px; }
.g-second { width: 254px; padding-left: 4px; }

.stack {
    display: flex;
    flex-direction: column;
}

.item {
    height: 23px;
    display: flex;
    align-items: center;
    gap: 1px;
    white-space: nowrap;
}

.item.muted {
    color: #aaa;
}

.ic {
    width: 18px;
    height: 18px;
    flex-shrink: 0;
}

.big {
    display: flex;
    flex-direction: column;
    align-items: center;
    padding-top: 5px;
    white-space: nowrap;
}

.big span {
    margin-top: 3px;
}

.big.selected {
    background-color: #c7d8ee;
    height: 67px;
    margin: 3px 5px 0 4px;
    padding-top: 2px;
}

.big.selected span {
    margin-top: 3px;
}

.w-42 { width: 42px; }
.w-44 { width: 44px; }
.w-50 { width: 50px; margin-left: 3px; }
.w-54 { width: 54px; }
.w-56 { width: 56px; margin-right: 2px; }
.w-64 { width: 64px; }
.w-66 { width: 66px; }
.w-78 { width: 78px; }
.w-102 { width: 102px; }
.w-110 { width: 110px; }

.caret {
    display: inline-block;
    margin-left: 6px;
    border-left: 3.5px solid transparent;
    border-right: 3.5px solid transparent;
    border-top: 4px solid #666;
    vertical-align: middle;
}

.caret.small {
    margin: 0 7px 0 0;
    border-left-width: 2.5px;
    border-right-width: 2.5px;
    border-top: 3px solid #aaa;
}

.big .big-caret {
    margin: 6px 0 0;
}

/* Floor strip */
.floor-strip {
    height: 29px;
    flex-shrink: 0;
    background-color: #c9ccd0;
    border-bottom: 1px solid #888;
    padding: 5px 0 0 3px;
}

.floor-tab {
    display: block;
    width: 37px;
    height: 21px;
    line-height: 19px;
    padding-left: 4px;
    background-color: #fff;
    border: 1px solid #aaa;
}

/* Main area */
.main {
    height: 570px;
    display: flex;
    flex-shrink: 0;
}

.tree {
    width: 136px;
    background-color: #fff;
    border-left: 1px solid #c5c8cc;
    border-right: 1px solid #c5c8cc;
    overflow: hidden;
}

.tree-head {
    height: 28px;
    margin-bottom: 4px;
    background-color: #f3f3f3;
    border-bottom: 1px solid #c5c8cc;
    padding: 10px 0 0 6px;
}

.tree-head svg {
    display: block;
}

.tree-row {
    height: 24px;
    display: flex;
    align-items: center;
    gap: 3px;
    padding-left: 4px;
    white-space: nowrap;
}

.tree-row.sub {
    padding-left: 24px;
    gap: 6px;
}

.tree-row.current {
    height: 21px;
    margin: 1px 17px 2px 20px;
    padding-left: 4px;
    background-color: #c7d8ee;
}

.folder {
    width: 17px;
    height: 13px;
}

.leaf {
    width: 16px;
    height: 16px;
}

.comp-list {
    width: 273px;
    margin-left: 4px;
    background-color: #fff;
    border: 1px solid #c5c8cc;
    padding: 0 0 87px 44px;
    display: flex;
    flex-direction: column;
    justify-content: flex-end;
}

.comp-row {
    height: 20px;
    line-height: 20px;
}

.canvas {
    width: 948px;
    margin-left: 5px;
    background-color: #000;
    position: relative;
    overflow: hidden;
}

.cad {
    display: block;
}

.cyan path,
.yellow path,
.red path {
    fill: none;
    shape-rendering: crispEdges;
}

.cyan path {
    stroke: #00ffff;
}

.yellow path {
    stroke: #ffff00;
}

.red path {
    stroke: #ff0000;
}

.red .red-thick {
    stroke-width: 1.4;
    shape-rendering: auto;
}

.axis-circle circle {
    fill: none;
    stroke: #0a900a;
}

.axis-label text {
    fill: #fff;
    stroke: #fff;
    stroke-width: 0.15;
    font: 400 18px "Liberation Sans", sans-serif;
}

.cad-text text {
    fill: #00a8a8;
    stroke: #00a8a8;
    stroke-width: 0.35;
    font: 100 30px Roboto, sans-serif;
}

.ucs-y {
    fill: #00ff00;
    font: 300 16px Roboto, sans-serif;
}

.ucs-x {
    fill: #ff0000;
    font: 300 17px Roboto, sans-serif;
}

.view-bar {
    position: absolute;
    left: 916px;
    top: 1px;
    width: 32px;
    height: 238px;
    z-index: 1;
    background-color: rgba(105, 105, 105, 0.78);
    border-radius: 4px 0 0 4px;
    padding: 13px 0 0 4px;
    display: flex;
    flex-direction: column;
    align-items: flex-start;
    gap: 5px;
}

.view-purple {
    position: absolute;
    left: 0;
    top: 177px;
    width: 32px;
    height: 31px;
    z-index: -1;
    background-color: rgba(139, 0, 255, 0.8);
}

.view-arrow {
    margin-left: 9px;
    border-left: 4px solid transparent;
    border-right: 4px solid transparent;
    border-top: 4px solid #2a2d32;
}

.view-rot {
    margin-top: 3px;
}

.view-calc {
    margin-top: 8px;
}

.view-3d {
    font: 9px "Liberation Sans", sans-serif;
    fill: #23262b;
}

.cad-top {
    position: absolute;
    left: 0;
    top: 0;
    z-index: 2;
    opacity: 0.65;
}

.top-line {
    stroke: #00ffff;
    fill: none;
}

/* Status bar */
.status {
    flex: 1;
    display: flex;
    align-items: flex-start;
    overflow: hidden;
    padding-top: 3px;
    white-space: nowrap;
    line-height: 16px;
    color: #333;
    position: relative;
}

.status > span {
    flex-shrink: 0;
}

.st-coord { width: 207px; padding: 4px 0 0 3px; }
.st-height { width: 80px; padding-top: 4px; margin-left: 3px; }
.st-level { width: 234px; padding-top: 4px; }
.st-hide { width: 80px; padding-top: 4px; }

.st-btn {
    height: 20px;
    margin-right: 3px;
    text-align: center;
    padding-top: 1px;
}

.st-gray {
    background-color: #d9d9db;
    border: 1px solid #a8a8a8;
}

.st-gray.st-light {
    border-color: #c0c0c0;
}

.st-blue {
    background-color: #fff;
    border: 1px solid #3a9aee;
}

.st-btn svg {
    display: block;
}

.w-26 { width: 25px; }
.w-36 { width: 36px; }
.w-37 { width: 36px; }
.w-74 { width: 73px; }
.w-60 { width: 60px; }

.st-hint {
    padding: 4px 0 0 2px;
    width: 367px;
}

.st-size {
    padding-top: 4px;
}

/* Dialog */
.dialog {
    position: absolute;
    left: 40px;
    top: 125px;
    width: 628px;
    height: 481px;
    background-color: #efefef;
    box-shadow: 1px 2px 5px rgba(0, 0, 0, 0.55);
    z-index: 5;
    display: flex;
    flex-direction: column;
}

.dialog-title {
    height: 26px;
    flex-shrink: 0;
    background-color: #2d7fe0;
    color: #fff;
    display: flex;
    align-items: center;
    justify-content: space-between;
    padding: 0 9px 2px 8px;
}

.dialog-tools {
    height: 41px;
    flex-shrink: 0;
    display: flex;
    align-items: center;
    padding: 0 13px 2px;
}

.radio {
    display: flex;
    align-items: center;
    gap: 5px;
    margin-right: 7px;
    position: relative;
}

.radio::before {
    content: "";
    width: 14px;
    height: 14px;
    border-radius: 50%;
    border: 1px solid #888;
    background-color: #fff;
}

.radio.checked {
    margin: 0 6px 0 7px;
}

.radio.second {
    margin-right: 8px;
}

.radio.checked::after {
    content: "";
    position: absolute;
    left: 4px;
    top: 50%;
    width: 6px;
    height: 6px;
    margin-top: -3px;
    border-radius: 50%;
    background-color: #4a9af0;
}

.btn {
    width: 100px;
    height: 26px;
    padding-bottom: 2px;
    font: inherit;
    color: #333;
    background-color: #f8f8f8;
    border: 1px solid #c3cad6;
    border-radius: 3px;
}

.tools-first {
    margin: 0 6px 0 auto;
}

.btn.disabled {
    color: #a8a8a8;
    background-color: #e4e4e4;
}

.btn.primary {
    background-color: #2d7fe0;
    border-color: #2d7fe0;
    color: #fff;
    margin: 0 6px 0 auto;
}

.dialog-foot .btn {
    width: 80px;
}

.table-wrap {
    height: 369px;
    flex-shrink: 0;
    margin: 0 12px 0 13px;
    background-color: #fff;
    border: 1px solid #c8cad0;
    overflow: hidden;
    position: relative;
}

.beams {
    width: 568px;
    table-layout: fixed;
    border-collapse: collapse;
    margin: -1px 0 0 -1px;
}

.c-no { width: 26px; }
.c-name { width: 76px; }
.c-sec { width: 77px; }
.c-top { width: 80px; }
.c-bot { width: 81px; }
.c-side { width: 81px; }
.c-hoop { width: 106px; }
.c-leg { width: 41px; }

.beams th,
.beams td {
    border: 1px solid #c8cad0;
    font-weight: normal;
    white-space: nowrap;
    overflow: hidden;
    padding-bottom: 2px;
}

.beams thead th {
    height: 21px;
    background-color: #efefef;
    color: #333;
}

.beams thead .corner {
    background-color: #fff;
    border-top-color: #fff;
    border-left-color: #fff;
}

.beams tbody th {
    height: 24px;
    background-color: #efefef;
    color: #555;
}

.beams td {
    padding-left: 3px;
    color: #111;
}

.beams tbody tr:nth-child(even) td {
    background-color: #e8e7e4;
}

.beams tbody tr td:last-child {
    background-color: #fff;
}

.scroll-up,
.scroll-down {
    position: absolute;
    left: 588px;
    border-left: 4px solid transparent;
    border-right: 4px solid transparent;
}

.scroll-up {
    top: 2px;
    border-bottom: 4px solid #333;
}

.scroll-down {
    bottom: 2px;
    border-top: 4px solid #333;
}

.scroll-thumb {
    position: absolute;
    left: 589px;
    top: 9px;
    width: 8px;
    height: 121px;
    border-radius: 4px;
    background-color: #cbcbcb;
}

.dialog-foot {
    flex: 1;
    display: flex;
    align-items: flex-start;
    padding: 6px 13px 0;
}

.foot-note {
    line-height: 26px;
}

.grip {
    position: absolute;
    right: 2px;
    bottom: 2px;
}
```
